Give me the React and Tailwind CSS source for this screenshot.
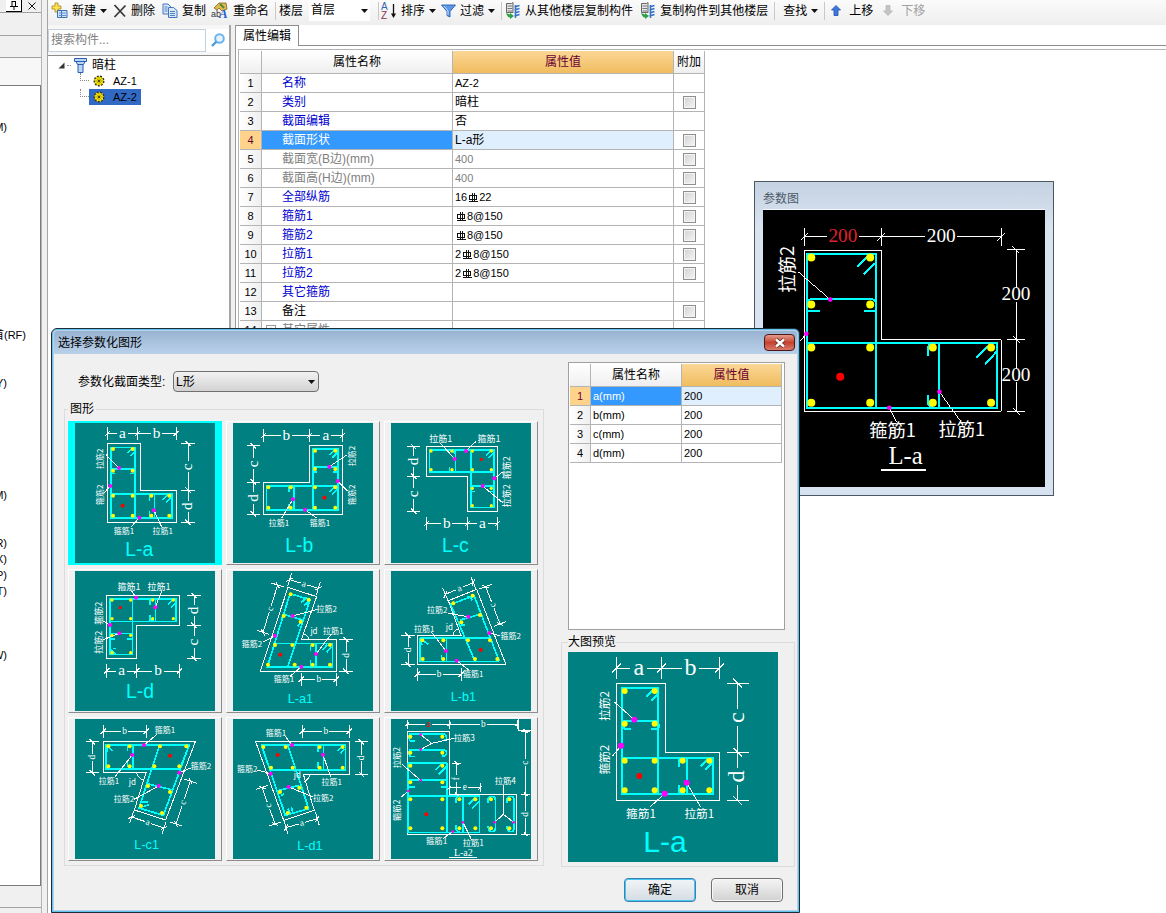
import { useState } from "react";

const rot = -90;

// Section drawings. Every drawing has its own box (viewBox) and lists its
// outline, rebar, dimensions [x1, y1, x2, y2, label, colour] and texts.
const shapes = {
  "L-a": {
    box: "75 293 420 420",
    outline: "M172 355H270V494H378V591H172Z",
    bars: "M182 366H255V577H182Z M182 506H365V577H182 M182 430H255 M313 506V577 M182 444h14 M241 444h14 M298 526v-14l8 -6 M298 558v14l8 5 M232 384l14 -14 M241 392l14 -14 M338 524l16 -16 M348 531l16 -16",
    leaders: "M168 388L207 428 M163 502L181 482 M243 605L268 577 M335 605L312 555",
    yellow: [[189, 371], [248, 371], [189, 436], [248, 436], [189, 511], [248, 511], [304, 511], [358, 511], [189, 571], [248, 571], [304, 571], [358, 571]],
    magenta: [[207, 428], [181, 482], [268, 577], [312, 555]],
    red: [218, 541],
    dims: [[172, 325, 262, 325, "a"], [262, 325, 378, 325, "b"], [414, 355, 414, 494, "c"], [414, 494, 414, 591, "d"]],
    texts: [[149, 400, "拉筋2", rot], [149, 508, "箍筋2", rot], [222, 616, "箍筋1"], [338, 616, "拉筋1"]],
    title: [268, 671],
  },
  "L-b": {
    box: "549 293 420 420",
    outline: "M640 470H778V361H877V566H640Z",
    bars: "M649 481H863V553H649Z M788 371H863V553H788Z M788 424H863 M732 481V553 M788 440h14 M849 440h14 M716 500v-12l8 -6 M716 535v12l8 5 M838 389l16 -16 M846 398l16 -16 M838 501l16 -16 M846 508l16 -16",
    leaders: "M892 388L838 424 M893 498L863 467 M695 578L729 522 M800 578L765 553",
    yellow: [[655, 486], [722, 486], [795, 486], [856, 486], [655, 547], [722, 547], [795, 547], [856, 547], [795, 376], [856, 376], [795, 431], [856, 431]],
    magenta: [[838, 424], [863, 467], [729, 522], [765, 553]],
    red: [823, 517],
    dims: [[640, 331, 778, 331, "b"], [778, 331, 877, 331, "a"], [610, 361, 610, 470, "c"], [610, 470, 610, 566, "d"]],
    texts: [[906, 392, "拉筋2", rot], [907, 508, "箍筋2", rot], [687, 592, "拉筋1"], [810, 592, "箍筋1"]],
    title: [748, 658],
  },
  "L-c": {
    box: "33 293 420 420",
    outline: "M139 364H352V558H262V453H139Z",
    bars: "M148 374H342V439H148Z M272 374H342V546H272Z M226 374V439 M272 482H342 M272 498h14 M328 498h14 M208 424v12 M318 390l14 -14 M326 398l14 -14 M210 376h10l5 8",
    leaders: "M182 354L224 401 M288 348L258 377 M368 440L343 459 M368 532L308 482",
    yellow: [[153, 377], [216, 377], [277, 377], [334, 377], [153, 433], [216, 433], [277, 433], [334, 433], [277, 489], [334, 489], [277, 541], [334, 541]],
    magenta: [[258, 377], [224, 401], [343, 459], [308, 482]],
    red: [304, 402],
    dims: [[101, 364, 101, 453, "d"], [101, 453, 101, 558, "c"], [139, 595, 262, 595, "b"], [262, 595, 352, 595, "a"]],
    texts: [[182, 341, "拉筋1"], [327, 341, "箍筋1"], [379, 427, "箍筋2", rot], [379, 511, "拉筋2", rot]],
    labelSize: 27,
    dotR: 5,
    title: [226, 658],
  },
  "L-d": {
    box: "45 18 420 420",
    outline: "M140 92H358V181H230V281H140Z",
    bars: "M150 101H347V169H150Z M150 101H217V268H150Z M286 101V169 M150 205H217 M150 222h16 M201 222h16 M270 120v-14 M270 150v14h12 M324 118l16 -16 M332 128l14 -14 M152 254l14 14 M160 250h8",
    leaders: "M215 78L228 98 M305 78L286 127 M128 167L150 180 M130 224L178 205",
    yellow: [[156, 105], [212, 105], [278, 105], [340, 105], [156, 161], [212, 161], [278, 161], [340, 161], [156, 211], [212, 211], [156, 263], [212, 263]],
    magenta: [[228, 98], [286, 127], [150, 180], [178, 205]],
    red: [181, 128],
    dims: [[140, 318, 230, 318, "a"], [230, 318, 358, 318, "b"], [402, 92, 402, 181, "d"], [402, 181, 402, 281, "c"]],
    texts: [[207, 65, "箍筋1"], [297, 65, "拉筋1"], [117, 145, "箍筋2", rot], [117, 232, "拉筋2", rot]],
    labelSize: 27,
    dotR: 5,
    title: [240, 378],
  },
  "L-a1": {
    box: "519 18 420 420",
    outline: "M684 67L770 95L724 224H829V319H601Z",
    bars: "M690 86L750 104L683 306 M690 86L622 306H817V235H640 M670 148L728 165 M768 235V306 M751 258v-14l8 -8 M751 285v14l8 6 M664 165l6 -16 M714 184l8 -14 M724 112l16 -14 M732 122l16 -14 M788 255l14 -16 M800 262l14 -16",
    leaders: "M770 134L698 153 M608 232L645 212 M815 206L768 267 M690 334L724 305 M733 207q12 5 14 17",
    yellow: [[692, 88], [746, 104], [671, 153], [722, 170], [645, 240], [697, 240], [758, 240], [810, 240], [624, 299], [704, 299], [758, 299], [810, 299]],
    magenta: [[698, 153], [645, 212], [768, 267], [724, 305]],
    red: [661, 269],
    dims: [[689, 44, 775, 70, "a"], [609, 202, 653, 60, "c"], [858, 224, 858, 319, "d"], [724, 343, 829, 343, "b"]],
    texts: [[800, 132, "拉筋2"], [576, 236, "箍筋2"], [762, 198, "jd"], [820, 197, "拉筋1"], [672, 342, "箍筋1"]],
    dimSize: 28,
    titleSize: 38,
    title: [721, 400],
  },
  "L-b1": {
    box: "33 18 420 420",
    outline: "M112 211H243L205 107L290 73L378 299H112Z",
    bars: "M120 219H330 M120 219V289H358 M212 118L282 92L358 289 M212 118L285 289 M240 165L303 147 M199 219V289 M244 180h12 M184 270v12l8 6 M126 240l-4 -12 M145 238l-14 -10 M262 96l18 0 M276 106l-6 -12",
    leaders: "M205 145L265 155 M360 212L328 204 M155 202L198 258 M268 316L230 287 M233 192q-12 6 -14 18",
    yellow: [[220, 115], [278, 92], [244, 172], [300, 150], [127, 226], [190, 226], [264, 226], [330, 226], [128, 282], [190, 282], [285, 282], [352, 282]],
    magenta: [[265, 155], [328, 204], [198, 258], [230, 287]],
    red: [302, 255],
    dims: [[196, 88, 280, 53, "a"], [317, 65, 360, 177, "c"], [84, 211, 84, 299, "d"], [112, 328, 243, 328, "b"]],
    texts: [[172, 136, "拉筋2"], [392, 212, "箍筋2"], [208, 185, "jd"], [133, 192, "拉筋1"], [280, 326, "箍筋1"]],
    dimSize: 28,
    titleSize: 38,
    title: [250, 395],
  },
  "L-c1": {
    box: "45 21 420 420",
    outline: "M129 89H406L317 324L223 294L258 182H129Z",
    bars: "M138 98H388L360 170H138Z M388 98L310 310L237 288L299 98 M262 215L335 233 M219 98V170 M202 116v-12l8 -5 M202 150v12l8 7 M140 120l4 -18 M158 118l-12 -14 M245 270l20 0 M250 284l16 -6",
    leaders: "M290 68L252 99 M165 194L217 129 M392 168L358 182 M222 262L296 222 M229 182q6 16 20 22",
    yellow: [[145, 103], [209, 103], [300, 103], [379, 103], [145, 163], [209, 163], [283, 163], [358, 163], [264, 222], [330, 240], [243, 282], [306, 303]],
    magenta: [[252, 99], [217, 129], [358, 182], [296, 222]],
    red: [330, 131],
    dims: [[129, 58, 259, 58, "b"], [97, 89, 97, 182, "d"], [348, 336, 391, 207, "c"], [215, 315, 312, 348, "a"]],
    texts: [[315, 55, "箍筋1"], [423, 163, "箍筋2"], [147, 207, "拉筋1"], [217, 210, "jd"], [192, 261, "拉筋2"]],
    dimSize: 28,
    titleSize: 38,
    title: [260, 396],
  },
  "L-d1": {
    box: "519 21 420 420",
    outline: "M587 89H867V187H730L763 295L671 325Z",
    bars: "M604 98H856V173H628 M604 98L676 310L746 290L683 98 M655 236L718 220 M790 98V173 M773 120v-14l8 -6 M773 150v14l8 8 M832 118l14 -14 M842 124l12 -14 M664 250l8 -4 M684 290l6 14 M694 286l4 14",
    leaders: "M675 72L696 99 M592 174L632 185 M812 195L789 128 M760 255L686 225 M733 208q14 -6 16 -21",
    yellow: [[610, 105], [677, 105], [779, 105], [848, 105], [633, 167], [698, 167], [779, 167], [848, 167], [660, 240], [718, 227], [683, 303], [739, 287]],
    magenta: [[696, 99], [632, 185], [789, 128], [686, 225]],
    red: [653, 129],
    dims: [[727, 58, 868, 58, "b"], [904, 89, 904, 187, "d"], [606, 226, 645, 336, "c"], [678, 347, 772, 320, "a"]],
    texts: [[648, 62, "箍筋1"], [562, 172, "箍筋2"], [712, 190, "jd"], [815, 209, "拉筋1"], [790, 257, "拉筋2"]],
    dimSize: 28,
    titleSize: 38,
    title: [750, 401],
  },
  "L-a2": {
    box: "33 462 420 420",
    outline: "M82 498H208V688H410V808H82Z",
    bars: "M84 692H298V802H84Z M200 594V802 M84 594H200 M84 594V692 M84 645H200 M248 692V802 M88 507H190q10 2 10 10q0 10 -14 10 M90 507q-6 10 0 20h14 M88 554H190q10 2 10 10q0 9 -14 9 M90 554q-6 10 0 20h14 M88 666h16 M184 666h14 M228 714v-14q4 -6 12 -6 M228 780v14q4 6 12 6 M324 714v-12q4 -8 14 -8q8 0 8 10V790q0 10 -10 10q-10 0 -12 -16 M380 714v-12q4 -8 14 -8q8 0 8 10V790q0 10 -10 10q-10 0 -12 -16 M166 616l20 -20 M176 628l22 -22 M266 718l20 -20 M276 730l20 -20",
    leaders: "M122 509L155 535L222 520 M155 535L122 554 M66 598L122 646 M64 696L85 678 M190 820L218 800 M275 825L249 772 M370 660V748L344 772 M370 748L401 772 M207 877H292 M414 462V495H453",
    yellow: [[91, 515], [187, 515], [91, 563], [187, 563], [91, 602], [187, 602], [91, 652], [187, 652], [91, 703], [187, 703], [238, 703], [286, 703], [333, 703], [388, 703], [91, 790], [187, 790], [238, 790], [286, 790], [333, 790], [388, 790]],
    magenta: [[122, 509], [122, 554], [122, 646], [85, 678], [218, 800], [249, 772], [344, 772], [401, 772]],
    red: [139, 748],
    dims: [[82, 478, 208, 478, "a", "#ff0000"], [208, 478, 412, 478, "b"], [437, 498, 437, 688, "c"], [437, 688, 437, 808, "d"], [230, 594, 230, 688, "f"], [208, 668, 301, 668, "e"]],
    texts: [[253, 518, "拉筋3"], [51, 578, "拉筋2", rot], [376, 647, "拉筋4"], [51, 736, "箍筋2", rot], [170, 828, "箍筋1"], [280, 833, "拉筋1"]],
    labelSize: 25,
    dimSize: 28,
    magentaR: 4,
    ext: 14,
    titleSize: 30,
    titleColor: "#ffffff",
    serifTitle: true,
    title: [250, 863],
  },
  preview: {
    box: "24 80 630 630",
    outline: "M169 173H317V381H479V526H169Z",
    bars: "M186 188H294V507H186Z M186 398H459V507H186 M186 286H294 M380 398V507 M190 296q0 15 8 15h14 M298 296q0 15 -8 15h-18 M356 424v-16q2 -8 12 -10 M356 480v18q4 6 12 8 M258 214l24 -24 M273 226l20 -20 M422 424l22 -22 M436 434l22 -22",
    leaders: "M163 230L223 283 M157 393L183 361 M270 545L314 505 M422 545L380 472",
    yellow: [[194, 197], [284, 197], [194, 295], [284, 295], [194, 406], [284, 406], [368, 406], [448, 406], [194, 495], [284, 495], [368, 495], [448, 495]],
    magenta: [[223, 283], [183, 361], [314, 505], [380, 472]],
    red: [238, 452],
    dims: [[169, 128, 304, 128, "a"], [304, 128, 479, 128, "b"], [533, 173, 533, 381, "c"], [533, 381, 533, 526, "d"]],
    texts: [[134, 242, "拉筋2", rot], [134, 403, "箍筋2", rot], [243, 565, "箍筋1"], [418, 565, "拉筋1"]],
    labelSize: 35,
    dimSize: 72,
    dotR: 9,
    magentaR: 9,
    ext: 33,
    titleSize: 90,
    title: [315, 648],
  },
  params: {
    box: "39 104 847 833",
    outline: "M163 227H395V493H754V709H163Z",
    bars: "M171 237H378V698H171Z M171 504H741V698H171 M184 371H366q12 4 12 16 M184 371q-12 4 -12 16 M171 408H210 M342 408H378 M569 504V698 M534 542V515q4 -8 14 -10 M534 660V685q4 8 14 12 M322 274l30 -30 M342 296l36 -34 M680 548l34 -34 M706 568l34 -38",
    leaders: "M145 290L241 373 M145 503L169 476 M440 740L418 698 M632 738L569 650 M393 884H528 M393 887H528",
    yellow: [[184, 247], [361, 247], [184, 388], [361, 388], [184, 517], [361, 517], [549, 517], [724, 517], [184, 683], [361, 683], [549, 683], [724, 683]],
    magenta: [[241, 373], [169, 476], [418, 698], [569, 650]],
    red: [271, 605],
    dims: [[163, 185, 395, 185, "200", "#e0202c"], [395, 185, 754, 185, "200"], [799, 223, 799, 493, "200"], [799, 493, 799, 709, "200"]],
    texts: [[112, 282, "拉筋2", rot], [428, 765, "箍筋1"], [636, 762, "拉筋1"]],
    labelSize: 55,
    dimSize: 58,
    dotR: 12,
    magentaR: 7,
    ext: 28,
    titleSize: 74,
    titleColor: "#ffffff",
    serifTitle: true,
    uprightDims: true,
    title: [467, 840],
  },
};

const Dimension = ({ dim, size, ext, upright }) => {
  const [x1, y1, x2, y2, label, color] = dim;
  const len = Math.hypot(x2 - x1, y2 - y1);
  const ux = (x2 - x1) / len;
  const uy = (y2 - y1) / len;
  const vertical = Math.abs(ux) < 0.01;
  const along = upright && !vertical ? size * 0.82 : size * 0.36;
  const mx = (x1 + x2) / 2;
  const my = (y1 + y2) / 2;
  const tick = ext * 0.4;
  const end = (x, y) =>
    `M${x - uy * ext} ${y + ux * ext}L${x + uy * ext} ${y - ux * ext}` +
    `M${x - (ux + uy) * tick} ${y + (ux - uy) * tick}L${x + (ux + uy) * tick} ${y - (ux - uy) * tick}`;
  let angle = (Math.atan2(uy, ux) * 180) / Math.PI;
  if (angle > 60) angle -= 180;
  if (upright) angle = 0;
  return (
    <g>
      <path
        d={`M${x1} ${y1}L${mx - ux * along} ${my - uy * along}M${mx + ux * along} ${my + uy * along}L${x2} ${y2}${end(x1, y1)}${end(x2, y2)}`}
        stroke="#fff"
        strokeWidth="3"
        shapeRendering="crispEdges"
      />
      <text
        transform={`translate(${mx} ${my}) rotate(${angle})`}
        y={size * 0.28}
        textAnchor="middle"
        fontSize={size}
        fill={color || "#fff"}
        className="font-['Liberation_Serif',serif]"
      >
        {label}
      </text>
    </g>
  );
};

const Drawing = ({ name, label, className }) => {
  const s = shapes[name];
  const labelSize = s.labelSize || 24;
  const dotR = s.dotR || 6;
  const titleSize = s.titleSize || 58;
  return (
    <svg viewBox={s.box} fill="none" className={className}>
      <g shapeRendering="crispEdges">
        <path d={s.outline} stroke="#fff" strokeWidth="3" />
        <path d={s.bars} stroke="#00ffff" strokeWidth={labelSize > 30 ? 6 : 5} />
        <path d={s.leaders} stroke="#fff" strokeWidth="3" />
      </g>
      {s.yellow.map(([x, y]) => (
        <circle key={`${x}-${y}`} cx={x} cy={y} r={dotR} fill="#ffff00" />
      ))}
      {s.magenta.map(([x, y]) => (
        <circle key={`${x}-${y}`} cx={x} cy={y} r={s.magentaR || 6} fill="#ff00ff" />
      ))}
      <circle cx={s.red[0]} cy={s.red[1]} r={dotR} fill="#ff0000" />
      {s.dims.map((dim) => (
        <Dimension key={dim.join()} dim={dim} size={s.dimSize || 46} ext={s.ext || 20} upright={s.uprightDims} />
      ))}
      {s.texts.map(([x, y, text, angle]) => (
        <text
          key={text}
          transform={`translate(${x} ${y}) rotate(${angle || 0})`}
          y={labelSize * 0.36}
          textAnchor="middle"
          fontSize={labelSize}
          fill="#fff"
          className="font-['Noto_Sans_CJK_SC',sans-serif]"
        >
          {text}
        </text>
      ))}
      <text
        x={s.title[0]}
        y={s.title[1] + titleSize * 0.36}
        textAnchor="middle"
        fontSize={titleSize}
        fill={s.titleColor || "#00ffff"}
        className={s.serifTitle ? "font-['Liberation_Serif',serif]" : "font-['Liberation_Sans',sans-serif]"}
      >
        {label}
      </text>
    </svg>
  );
};

const Caret = () => (
  <svg width="7" height="4" viewBox="0 0 7 4" className="shrink-0">
    <path d="M0 0H7L3.5 4Z" fill="#111" />
  </svg>
);

const NewIcon = () => (
  <svg width="17" height="17" viewBox="0 0 17 17">
    <path d="M4 1h3v3h3v3H7v3H4V7H1V4h3z" fill="#ffe14d" stroke="#a8861c" strokeWidth=".8" />
    <path d="M6.500 8.500h4v7h-4zM10.500 8.500h5.500v7h-5.500z" fill="#cfe3fa" stroke="#3d6fb5" />
    <path d="M8 11h7M8 13.500h7" stroke="#5b8fd6" />
  </svg>
);

const DeleteIcon = () => (
  <svg width="14" height="14" viewBox="0 0 14 14">
    <path d="M1.500 1L12 12.500M12.500 1.500L1.500 13" stroke="#3a3a3a" strokeWidth="1.800" fill="none" />
  </svg>
);

const CopyIcon = () => (
  <svg width="16" height="15" viewBox="0 0 16 15">
    <path d="M1 1h5l3 3v7H1z" fill="#d8e8fb" stroke="#4474bd" />
    <path d="M6.500 4.500h5l3.500 3v7H6.500z" fill="#d8e8fb" stroke="#4474bd" />
    <path d="M2.500 4h3M2.500 6h3M2.500 8h3M8 8.500h5M8 10.500h5M8 12.500h5" stroke="#4474bd" strokeWidth=".9" />
  </svg>
);

const RenameIcon = () => (
  <svg width="18" height="17" viewBox="0 0 18 17">
    <path d="M3 6l5-5h7l1 6-5 2-3-3-2 2z" fill="#e3b94e" stroke="#7c6328" strokeWidth=".8" />
    <path d="M9 2l4 4" stroke="#4e8c3a" strokeWidth="2" />
    <text x="0" y="15" fontSize="9" fill="#333" className="font-['Liberation_Sans',sans-serif]">ab</text>
    <text x="8" y="16" fontSize="13" fill="#2360c4" className="font-['Liberation_Serif',serif] font-bold italic">A</text>
  </svg>
);

const SortIcon = () => (
  <svg width="16" height="17" viewBox="0 0 16 17">
    <text x="0" y="8" fontSize="10" fill="#3763b5" className="font-['Liberation_Sans',sans-serif]">A</text>
    <text x="0" y="17" fontSize="10" fill="#8d3050" className="font-['Liberation_Sans',sans-serif]">Z</text>
    <path d="M12.500 2v12" stroke="#111" strokeWidth="1.300" />
    <path d="M10 11.500h5L12.500 16z" fill="#111" />
  </svg>
);

const FilterIcon = () => (
  <svg width="15" height="14" viewBox="0 0 15 14">
    <path d="M.5 1h14L9 7.500V13l-3-1.500v-4z" fill="#5b97e6" stroke="#285fb0" strokeWidth=".9" />
    <path d="M3 2l4 5v4" stroke="#cfe3fb" fill="none" />
  </svg>
);

const FloorIcon = () => (
  <svg width="17" height="17" viewBox="0 0 17 17">
    <path d="M2.500 1.500h5l1.500-1v10h-6.500z" fill="#e8e8e8" stroke="#666" />
    <path d="M3.500 4h5M3.500 6.500h5M3.500 9h5" stroke="#777" />
    <path d="M2 11l4 1.500V11l4 3-4 3v-1.500c-2 0-3-2-4-4.500z" fill="#2fa145" />
    <path d="M10.500 5l5-1.500M10.500 8l5-1.500M10.500 11l5-1.500M10.500 14l5-1.500M11.500 3v13" stroke="#3273c9" strokeWidth="1.500" />
  </svg>
);

const ArrowIcon = ({ down }) => (
  <svg width="10" height="11" viewBox="0 0 10 11" className={down ? "rotate-180" : ""}>
    <path d="M5 .5L9.500 5H7v5.500H3V5H.5z" fill={down ? "#c4c4c4" : "#3d78e0"} stroke={down ? "#b5b5b5" : "#1e4fa8"} strokeWidth=".8" />
  </svg>
);

const ColumnIcon = () => (
  <svg width="15" height="16" viewBox="0 0 15 16">
    <path d="M1.500 1.500h12v3h-12zM3 4.500h9l-1.500 3h-6zM5 7.500h5v8H5z" fill="#bcd6f7" stroke="#2a5cb0" />
  </svg>
);

const GearIcon = () => (
  <svg width="12" height="12" viewBox="0 0 12 12">
    <circle cx="6" cy="6" r="4.800" fill="#ffee00" stroke="#333" strokeWidth="1.400" strokeDasharray="2 1.300" />
    <path d="M6 2v8M2 6h8M3.200 3.200l5.600 5.600M8.800 3.200L3.200 8.800" stroke="#8a7d00" strokeWidth=".7" />
    <circle cx="6" cy="6" r="1" fill="#333" />
  </svg>
);

// HRB400 bar mark
const RebarMark = () => (
  <svg width="11" height="11" viewBox="0 0 11 11" className="shrink-0">
    <path d="M1.500 3.500h7v3.500h-7zM4.500 1v9M6.500 1v9M1 9.500h9" fill="none" stroke="#111" shapeRendering="crispEdges" />
  </svg>
);

const Separator = () => <span className="h-[18px] w-px shrink-0 bg-[#c9c9c9]" />;

const ToolButton = ({ icon, label, menu, disabled, className = "" }) => (
  <button disabled={disabled} className={`flex shrink-0 items-center gap-1 whitespace-nowrap disabled:text-[#a0a0a0] ${className}`}>
    {icon}
    <span>{label}</span>
    {menu && <Caret />}
  </button>
);

const Toolbar = () => (
  <div className="flex h-[25px] shrink-0 items-center overflow-hidden bg-linear-to-b from-[#fbfbfb] to-[#eeeeee] pb-1 pl-[3px] text-[12px] leading-[16px]">
    <ToolButton icon={<NewIcon />} label="新建" menu />
    <ToolButton icon={<DeleteIcon />} label="删除" className="ml-1.5" />
    <ToolButton icon={<CopyIcon />} label="复制" className="ml-[7px]" />
    <ToolButton icon={<RenameIcon />} label="重命名" className="mr-1.5 ml-[5px]" />
    <Separator />
    <label htmlFor="floor" className="ml-[3px] shrink-0">楼层</label>
    <div className="relative mr-2 ml-1.5 h-[21px] w-[61px] shrink-0 bg-white">
      <select id="floor" className="h-full w-full appearance-none bg-transparent pb-px pl-0.5 outline-none">
        <option>首层</option>
      </select>
      <span className="pointer-events-none absolute top-[9px] right-[2px]"><Caret /></span>
    </div>
    <Separator />
    <ToolButton icon={<SortIcon />} label="排序" menu className="ml-0.5" />
    <ToolButton icon={<FilterIcon />} label="过滤" menu className="mr-1.5 ml-[5px]" />
    <Separator />
    <ToolButton icon={<FloorIcon />} label="从其他楼层复制构件" className="ml-0.5" />
    <ToolButton icon={<FloorIcon />} label="复制构件到其他楼层" className="mr-1.5 ml-1.5" />
    <Separator />
    <ToolButton label="查找" menu className="mr-1.5 ml-2" />
    <Separator />
    <ToolButton icon={<ArrowIcon />} label="上移" className="ml-1.5 [&>span]:ml-1" />
    <ToolButton icon={<ArrowIcon down />} label="下移" disabled className="ml-2.5 [&>span]:ml-1" />
  </div>
);

const dockRows = { 2: "M)", 15: "首(RF)", 18: "Y)", 25: "M)", 28: "R)", 29: "X)", 30: "P)", 31: "T)", 35: "W)" };

const Dock = () => (
  <aside className="flex w-12 shrink-0 border-r border-[#a5a5a5] bg-[#f0f0f0]">
    <div className="flex w-[42px] flex-col border-r border-[#b4b4b4]">
      <div className="flex h-[13px] shrink-0 items-center justify-end overflow-hidden border-b border-[#a0a0a0]">
        <button aria-label="Pin" className="flex h-full w-4 items-center justify-center border-r border-b border-black bg-white">
          <svg width="8" height="9" viewBox="0 0 8 9">
            <path d="M2 0v5M2 .5h4M5.500 0v5M0 5.500h8M4 5.500V9" stroke="#000" fill="none" />
          </svg>
        </button>
        <button aria-label="Close" className="flex w-[19px] items-center justify-center">
          <svg width="8" height="8" viewBox="0 0 8 8">
            <path d="M.5 .5l7 7M7.500 .5l-7 7" stroke="#111" fill="none" />
          </svg>
        </button>
      </div>
      <div className="h-[23px] shrink-0 border-b border-[#a0a0a0]" />
      <div className="h-[22px] shrink-0 border-b border-[#a0a0a0]" />
      <div className="h-[27px] shrink-0 bg-[#f7f7f7]" />
      <ul className="flex-1 overflow-hidden border-t border-r border-b border-[#7b7b7b] bg-white pt-px">
        {Array.from({ length: 49 }, (_, i) => (
          <li key={i} className={`flex h-4 justify-end overflow-hidden text-[11px] leading-4 whitespace-nowrap ${i === 15 ? "w-[26px]" : "w-[7px]"}`}>
            {dockRows[i]}
          </li>
        ))}
      </ul>
      <div className="h-[22px] shrink-0 border-b border-[#a0a0a0]" />
      <div className="h-[5px] shrink-0" />
    </div>
  </aside>
);

const ComponentTree = () => {
  const [picked, setPicked] = useState("AZ-2");
  return (
    <div className="flex w-[183px] shrink-0 flex-col border-r-2 border-[#a5a5a5] bg-white">
      <div className="flex h-[30px] items-center bg-[#f7f7f7]">
        <input
          aria-label="搜索构件"
          placeholder="搜索构件..."
          className="h-[23px] w-[158px] border border-[#c4d0dc] bg-white px-0.5 text-[12px] outline-none placeholder:text-[#808080]"
        />
        <button aria-label="搜索" className="flex h-[23px] flex-1 items-center justify-center bg-white">
          <svg width="14" height="14" viewBox="0 0 14 14">
            <circle cx="8.500" cy="5.500" r="4.300" fill="#e3f2fd" stroke="#6bb3ea" strokeWidth="2" />
            <path d="M5.500 8.500L1 13" stroke="#4f9be0" strokeWidth="2.400" />
          </svg>
        </button>
      </div>
      <div className="flex-1 border-t border-[#8c8c8c] pt-px text-[12px]">
        <div className="flex h-4 items-center gap-0.5 pl-2.5">
          <svg width="7" height="7" viewBox="0 0 7 7"><path d="M6.500 0.500V6.500H0.500Z" fill="#333" /></svg>
          <span className="w-1 border-t border-dotted border-[#999]" />
          <ColumnIcon />
          <span className="ml-0.5">暗柱</span>
        </div>
        <ul className="ml-8 text-[11px]">
          {["AZ-1", "AZ-2"].map((name) => (
            <li key={name} className="flex h-4">
              <span className="h-2 w-[9px] border-b border-l border-dotted border-[#888]" />
              <button
                onClick={() => setPicked(name)}
                className={`flex h-4 items-center gap-2 pr-1 pl-1 ${picked === name ? "bg-[#316ac5]" : ""}`}
              >
                <GearIcon />
                <span>{name}</span>
              </button>
            </li>
          ))}
        </ul>
      </div>
    </div>
  );
};

const properties = [
  { name: "名称", value: "AZ-2", tone: "blue", latin: true },
  { name: "类别", value: "暗柱", tone: "blue", extra: true },
  { name: "截面编辑", value: "否", tone: "blue" },
  { name: "截面形状", value: "L-a形", tone: "active", extra: true },
  { name: "截面宽(B边)(mm)", value: "400", tone: "gray", extra: true, latin: true },
  { name: "截面高(H边)(mm)", value: "400", tone: "gray", extra: true, latin: true },
  { name: "全部纵筋", rebar: ["16", "22"], tone: "blue", extra: true },
  { name: "箍筋1", rebar: ["", "8@150"], tone: "blue", extra: true },
  { name: "箍筋2", rebar: ["", "8@150"], tone: "blue", extra: true },
  { name: "拉筋1", rebar: ["2", "8@150"], tone: "blue", extra: true },
  { name: "拉筋2", rebar: ["2", "8@150"], tone: "blue", extra: true },
  { name: "其它箍筋", value: "", tone: "blue" },
  { name: "备注", value: "", tone: "black", extra: true },
  { name: "其它属性", value: "", tone: "group" },
];

const tones = {
  blue: "text-[#0000d0]",
  active: "bg-[#3399ff] text-white",
  gray: "text-[#808080]",
  group: "text-[#808080]",
  black: "text-black",
};

const head = "h-[23px] border-r border-b border-[#b4b4b4] bg-linear-to-b from-white to-[#efefef] p-0 font-normal";
const goldHead = "h-[23px] border-r border-b border-[#b4b4b4] bg-linear-to-b from-[#fbd795] to-[#f0bc5e] p-0 font-normal text-[#6b0032]";
const cell = "h-[19px] border-r border-b border-[#b4b4b4] p-0";

const PropertyTable = () => (
  <table className="w-[465px] table-fixed border-separate border-spacing-0 text-[12px] leading-[18px]">
    <thead>
      <tr>
        <th className={`${head} w-[22px]`} />
        <th className={`${head} w-[191px]`}>属性名称</th>
        <th className={`${goldHead} w-[221px]`}>属性值</th>
        <th className={head}>附加</th>
      </tr>
    </thead>
    <tbody>
      {properties.map((p, i) => {
        const active = p.tone === "active";
        return (
          <tr key={p.name}>
            <td className={`${cell} text-center text-[11px] ${active ? "bg-[#ffd48a] text-[#6b0032]" : "bg-linear-to-r from-white to-[#efefef]"}`}>{i + 1}</td>
            <td className={`${cell} ${tones[p.tone]}`}>
              <div className="flex items-center pl-5">
                {p.tone === "group" && <span className="-ml-4 mr-1.5 flex size-2.5 items-center justify-center border border-[#999] text-[9px]">+</span>}
                {p.name}
              </div>
            </td>
            <td className={`${cell} ${active ? "bg-[#e0effd]" : ""} ${p.tone === "gray" ? "text-[#808080]" : ""}`}>
              <div className={`flex items-center pl-0.5 ${p.rebar || p.latin ? "text-[11px]" : ""}`}>
                {p.rebar ? <>{p.rebar[0]}<span className="pl-px"><RebarMark /></span>{p.rebar[1]}</> : p.value}
              </div>
            </td>
            <td className={cell}>
              {p.extra && (
                <input
                  type="checkbox"
                  aria-label={`${p.name} 附加`}
                  className="mx-auto block size-[13px] appearance-none border border-[#8e8f8f] bg-linear-to-br from-[#cfd2d6] to-[#f6f6f6] shadow-[inset_0_0_0_1px_#f4f4f4] checked:bg-[#3399ff]"
                />
              )}
            </td>
          </tr>
        );
      })}
    </tbody>
  </table>
);

const PropertyPanel = () => (
  <div className="ml-1 flex min-w-0 flex-1 flex-col border-l border-[#9a9a9a] bg-white">
    <div className="flex h-[21px] shrink-0">
      <button className="w-[63px] border-t border-r border-[#8c8c8c] text-[12px] leading-[18px]">属性编辑</button>
      <div className="flex-1 border-b border-[#8c8c8c]" />
    </div>
    <div className="mt-[3px] ml-0.5 flex-1 overflow-hidden border-t border-l border-[#b4b4b4] pt-px pl-px">
      <PropertyTable />
    </div>
  </div>
);

const ParamWindow = () => (
  <div className="absolute top-[181px] left-[754px] flex w-[300px] flex-col border border-[#4b5763] bg-linear-to-b from-[#c5d2e1] via-[#d9e4f1] via-15% to-[#d6e2f0] px-2 pb-2">
    <div className="flex h-[27px] items-center pt-1.5 text-[12px] text-[#4c5a68]">参数图</div>
    <div className="border-t border-[#f5f8fb] bg-black">
      <Drawing name="params" label="L-a" className="block w-full" />
    </div>
  </div>
);

const DimensionTable = () => (
  <table className="w-[212px] table-fixed border-separate border-spacing-0 text-[12px] leading-[18px]">
    <thead>
      <tr>
        <th className={`${head} w-[21px]`} />
        <th className={`${head} w-[91px]`}>属性名称</th>
        <th className={goldHead}>属性值</th>
      </tr>
    </thead>
    <tbody className="text-[11px]">
      {["a(mm)", "b(mm)", "c(mm)", "d(mm)"].map((name, i) => (
        <tr key={name}>
          <td className={`${cell} text-center ${i === 0 ? "bg-[#ffd48a] text-[#6b0032]" : "bg-linear-to-r from-white to-[#efefef]"}`}>{i + 1}</td>
          <td className={`${cell} pl-0.5 ${i === 0 ? "bg-[#3399ff] text-white" : ""}`}>{name}</td>
          <td className={`${cell} pl-0.5 ${i === 0 ? "bg-[#e0effd]" : ""}`}>200</td>
        </tr>
      ))}
    </tbody>
  </table>
);

const tiles = ["L-a", "L-b", "L-c", "L-d", "L-a1", "L-b1", "L-c1", "L-d1", "L-a2"];

const ShapeDialog = () => {
  const [selected, setSelected] = useState("L-a");
  return (
    <div role="dialog" aria-labelledby="dialog-title" className="absolute top-[328px] left-[51px] flex w-[749px] flex-col rounded-t-md border border-[#1d2b3a] bg-[#b7cfe8] p-0.5 shadow-[inset_0_0_0_1px_#5fc4ea]">
      <div className="flex h-[23px] items-center justify-between rounded-t bg-linear-to-b from-[#98b4d2] to-[#bad0ea] pr-0.5 pl-1">
        <h2 id="dialog-title" className="text-[12px]">选择参数化图形</h2>
        <button aria-label="关闭" className="flex h-[17px] w-[31px] items-center justify-center rounded-sm border border-[#4a1a1a] bg-linear-to-b from-[#e39a8c] via-[#c5402c] to-[#d8796a]">
          <svg width="12" height="10" viewBox="0 0 12 10">
            <path d="M2 1.500l8 7M10 1.500l-8 7" stroke="#5a2a2a" strokeWidth="4" />
            <path d="M2 1.500l8 7M10 1.500l-8 7" stroke="#fff" strokeWidth="2.400" />
          </svg>
        </button>
      </div>
      <div className="flex h-[556px] flex-col bg-[#f0f0f0] pl-2.5">
        <div className="flex flex-1">
          <div className="w-[480px] shrink-0">
            <div className="mt-[17px] flex items-center pl-3.5 text-[12px]">
              <label htmlFor="section-type" className="w-[95px]">参数化截面类型:</label>
              <div className="relative h-[21px] w-[146px]">
                <select id="section-type" className="h-full w-full appearance-none rounded-sm border border-[#707070] bg-linear-to-b from-[#f2f2f2] to-[#d2d2d2] pl-0.5 outline-none">
                  <option>L形</option>
                </select>
                <span className="pointer-events-none absolute top-[9px] right-1"><Caret /></span>
              </div>
            </div>
            <fieldset className="mt-2 h-[466px] border border-[#dcdcdc] px-[3px] text-[12px]">
              <legend className="px-0.5 leading-[18px]">图形</legend>
              <div className="mt-[3px] grid grid-cols-[repeat(3,154px)] gap-1">
                {tiles.map((name) => (
                  <button
                    key={name}
                    aria-pressed={selected === name}
                    onClick={() => setSelected(name)}
                    className={`flex h-36 items-center justify-center border ${
                      selected === name ? "border-[#00ffff] bg-[#00ffff]" : "border-t-white border-r-[#8c8c8c] border-b-[#8c8c8c] border-l-white bg-[#f0f0f0]"
                    }`}
                  >
                    <Drawing name={name} label={name} className="block size-[140px] bg-[#008080]" />
                  </button>
                ))}
              </div>
            </fieldset>
          </div>
          <div className="flex-1 pt-2 pl-[17px]">
            <div className="ml-[7px] h-[268px] w-[217px] border border-[#a0a0a0] bg-white p-px">
              <DimensionTable />
            </div>
            <fieldset className="mt-[3px] mr-0.5 h-[234px] border border-[#dcdcdc] px-1.5 text-[12px]">
              <legend className="leading-[18px]">大图预览</legend>
              <Drawing name="preview" label="L-a" className="mt-px block size-[210px] bg-[#008080]" />
            </fieldset>
          </div>
        </div>
        <div className="mb-2 flex justify-end gap-[15px] pr-[14px] text-[12px]">
          <button className="h-6 w-[72px] rounded-sm border border-[#3c7fb1] bg-linear-to-b from-[#f2f5f7] to-[#d3dde4] shadow-[inset_0_0_0_1px_#48c8f0]">确定</button>
          <button className="h-6 w-[72px] rounded-sm border border-[#707070] bg-linear-to-b from-[#f4f4f4] to-[#d2d2d2] shadow-[inset_0_0_0_1px_#f8f8f8]">取消</button>
        </div>
      </div>
    </div>
  );
};

const App = () => {
  return (
    <div className="relative flex h-screen overflow-hidden bg-[#f0f0f0] font-['Liberation_Sans','Noto_Sans_CJK_SC',sans-serif] text-black">
      <Dock />
      <main className="flex min-w-0 flex-1 flex-col">
        <Toolbar />
        <div className="flex min-h-0 flex-1">
          <ComponentTree />
          <PropertyPanel />
        </div>
      </main>
      <ParamWindow />
      <ShapeDialog />
    </div>
  );
};

export default App;
